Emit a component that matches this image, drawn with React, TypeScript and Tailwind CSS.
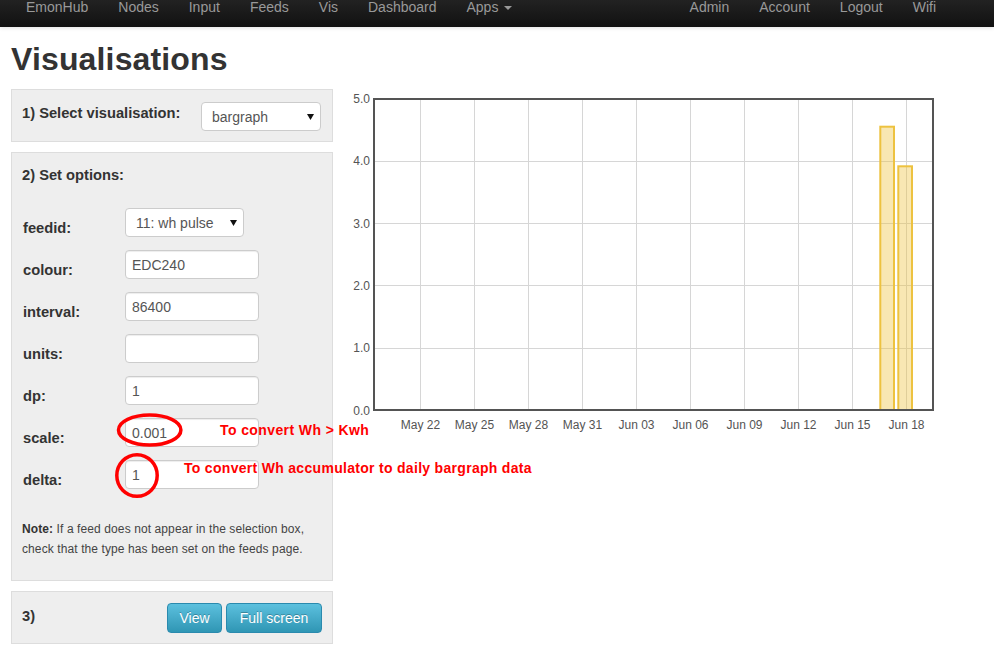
import React from "react";

const FONT = { fontFamily: '"Liberation Sans", Arial, sans-serif' };

function Caret() {
  return (
    <svg width="7" height="6" viewBox="0 0 7 6" className="shrink-0">
      <path d="M0 0 L7 0 L3.5 6 Z" fill="#111" />
    </svg>
  );
}

function SelectBox({ value, width }: { value: string; width: string }) {
  return (
    <div
      className={`${width} h-[29px] bg-white border border-[#cccccc] rounded-[4px] flex items-center justify-between pl-[10px] pr-[6px] text-[14px] text-[#555555]`}
    >
      <span className="leading-[20px] pt-[1px]">{value}</span>
      <Caret />
    </div>
  );
}

function TextBox({ value }: { value: string }) {
  return (
    <div className="w-[134px] h-[29px] bg-white border border-[#cccccc] rounded-[4px] shadow-[inset_0_1px_1px_rgba(0,0,0,0.075)] pl-[6px] pt-[4px] text-[14px] leading-[20px] text-[#555555]">
      {value}
    </div>
  );
}

function Chart() {
  const xLabels = [
    "May 22",
    "May 25",
    "May 28",
    "May 31",
    "Jun 03",
    "Jun 06",
    "Jun 09",
    "Jun 12",
    "Jun 15",
    "Jun 18",
  ];
  const yOf = (v: number) => 321 - 62.3 * v;
  return (
    <svg width="620" height="360" className="shrink-0" style={{ fontFamily: '"Liberation Sans", Arial, sans-serif' }}>
      {xLabels.map((_, i) => (
        <line key={"v" + i} x1={87.5 + 54 * i} x2={87.5 + 54 * i} y1={10} y2={321} stroke="#d6d6d6" strokeWidth={1} />
      ))}
      {[1, 2, 3, 4].map((v) => (
        <line key={"h" + v} x1={41} x2={600} y1={Math.round(yOf(v)) + 0.5} y2={Math.round(yOf(v)) + 0.5} stroke="#d6d6d6" strokeWidth={1} />
      ))}
      <rect x={547.3} y={37.7} width={13.7} height={321 - 37.7} fill="rgba(237,194,64,0.4)" stroke="#EDC240" strokeWidth={2} />
      <rect x={565.3} y={77.3} width={13.7} height={321 - 77.3} fill="rgba(237,194,64,0.4)" stroke="#EDC240" strokeWidth={2} />
      <rect x={41} y={10} width={559} height={311} fill="none" stroke="#545454" strokeWidth={2} />
      {[0, 1, 2, 3, 4, 5].map((v) => (
        <text key={"yl" + v} x={37} y={yOf(v) + 4.5} textAnchor="end" fontSize="12" fill="#545454">
          {v.toFixed(1)}
        </text>
      ))}
      {xLabels.map((l, i) => (
        <text key={"xl" + i} x={87.5 + 54 * i} y={340} textAnchor="middle" fontSize="12" fill="#545454">
          {l}
        </text>
      ))}
    </svg>
  );
}

export default function App() {
  const leftNav = ["EmonHub", "Nodes", "Input", "Feeds", "Vis", "Dashboard"];
  const rightNav = ["Admin", "Account", "Logout", "Wifi"];
  const rows: { label: string; kind: "select" | "text"; value: string }[] = [
    { label: "feedid:", kind: "select", value: "11: wh pulse" },
    { label: "colour:", kind: "text", value: "EDC240" },
    { label: "interval:", kind: "text", value: "86400" },
    { label: "units:", kind: "text", value: "" },
    { label: "dp:", kind: "text", value: "1" },
    { label: "scale:", kind: "text", value: "0.001" },
    { label: "delta:", kind: "text", value: "1" },
  ];

  return (
    <div className="relative w-[994px] h-[650px] overflow-hidden bg-white text-[#333333]" style={FONT}>
      {/* Navbar */}
      <div className="relative z-10 h-[27px] bg-gradient-to-b from-[#222222] to-[#111111] shadow-[0_1px_4px_rgba(0,0,0,0.12)] flex justify-between pl-[11px] pr-[43px] text-[14px] text-[#999999]">
        <div className="flex">
          {leftNav.map((n) => (
            <span key={n} className="px-[15px] leading-[16px] -mt-[1px]">
              {n}
            </span>
          ))}
          <span className="px-[15px] leading-[16px] -mt-[1px] flex items-start">
            Apps
            <span className="ml-[6px] mt-[7px] w-0 h-0 border-t-[4px] border-t-[#999999] border-l-[4px] border-l-transparent border-r-[4px] border-r-transparent" />
          </span>
        </div>
        <div className="flex">
          {rightNav.map((n) => (
            <span key={n} className="px-[15px] leading-[16px] -mt-[1px]">
              {n}
            </span>
          ))}
        </div>
      </div>

      {/* Title */}
      <h1 className="mt-[14px] ml-[11px] text-[32px] leading-[36px] font-bold text-[#333333] tracking-[0.15px]">Visualisations</h1>

      {/* Body */}
      <div className="mt-[12px] pl-[11px] flex items-start">
        <div className="w-[322px] shrink-0 flex flex-col gap-[10px]">
          {/* Panel 1 */}
          <div className="h-[53px] bg-[#eeeeee] border border-[#dddddd] pt-[12px] pl-[10px] pr-[11px] flex justify-between items-start">
            <span className="mt-[1px] text-[14.7px] leading-[20px] font-bold">1) Select visualisation:</span>
            <SelectBox value="bargraph" width="w-[120px]" />
          </div>

          {/* Panel 2 */}
          <div className="bg-[#eeeeee] border border-[#dddddd] pt-[12px] pl-[10px] pr-[10px] pb-[21px]">
            <div className="text-[14.7px] leading-[20px] font-bold">2) Set options:</div>
            <div className="mt-[23px] flex flex-col gap-[13px]">
              {rows.map((r) => (
                <div key={r.label} className="flex h-[29px] items-start">
                  <span className="w-[103px] pl-[1px] mt-[10px] text-[14.7px] leading-[20px] font-bold">{r.label}</span>
                  {r.kind === "select" ? <SelectBox value={r.value} width="w-[119px]" /> : <TextBox value={r.value} />}
                </div>
              ))}
            </div>
            <div className="mt-[30px] text-[12px] leading-[20px] text-[#444444] tracking-[0.1px]">
              <b className="text-[#333333]">Note:</b> If a feed does not appear in the selection box,
              <br />
              check that the type has been set on the feeds page.
            </div>
          </div>

          {/* Panel 3 */}
          <div className="h-[53px] bg-[#eeeeee] border border-[#dddddd] pt-[11px] pl-[10px] pr-[10px] flex justify-between items-start">
            <span className="mt-[3px] text-[14.7px] leading-[20px] font-bold">3)</span>
            <div className="flex gap-[4px]">
              <div className="w-[55px] h-[30px] rounded-[4px] border border-[#2a8aae] bg-gradient-to-b from-[#5bc0de] to-[#2f96b4] text-white text-[14px] leading-[28px] text-center [text-shadow:0_-1px_0_rgba(0,0,0,0.25)]">
                View
              </div>
              <div className="w-[96px] h-[30px] rounded-[4px] border border-[#2a8aae] bg-gradient-to-b from-[#5bc0de] to-[#2f96b4] text-white text-[14px] leading-[28px] text-center [text-shadow:0_-1px_0_rgba(0,0,0,0.25)]">
                Full screen
              </div>
            </div>
          </div>
        </div>

        <Chart />
      </div>

      {/* Red annotations overlay */}
      <svg className="absolute left-0 top-0 pointer-events-none" width="994" height="650">
        <ellipse cx={149.7} cy={430} rx={31.2} ry={15} fill="none" stroke="#ff0000" strokeWidth={3.5} />
        <ellipse cx={137} cy={475.5} rx={20.2} ry={20.8} fill="none" stroke="#ff0000" strokeWidth={3.5} />
      </svg>
      <div className="absolute left-[220px] top-[422px] text-[14px] leading-[16px] font-bold text-[#ff0000] tracking-[0.4px] whitespace-nowrap">
        To convert Wh &gt; Kwh
      </div>
      <div className="absolute left-[184px] top-[460px] text-[14px] leading-[16px] font-bold text-[#ff0000] tracking-[0.3px] whitespace-nowrap">
        To convert Wh accumulator to daily bargraph data
      </div>
    </div>
  );
}
